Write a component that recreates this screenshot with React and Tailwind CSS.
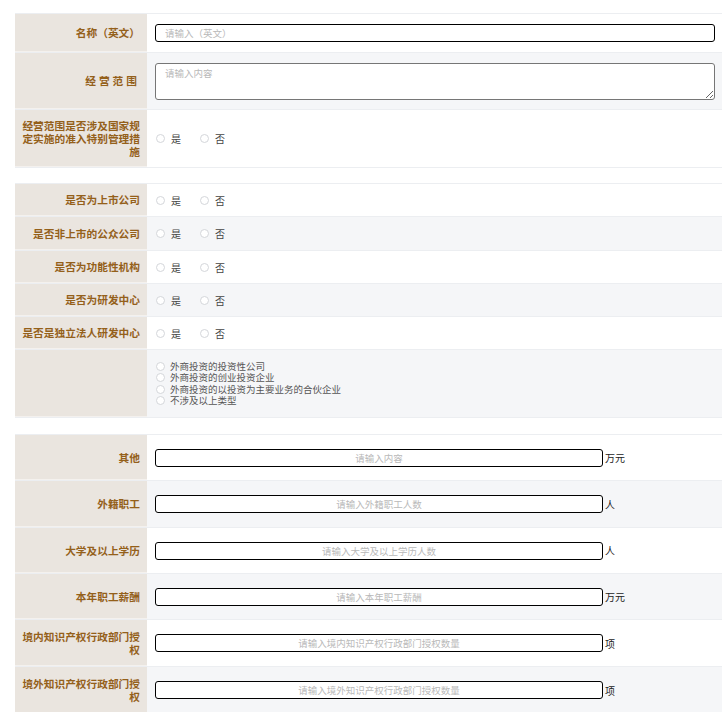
import React from "react";

const font = { fontFamily: '"Noto Sans CJK SC", "Noto Sans", sans-serif' };

function Label({ children, wide }) {
  return (
    <div
      className={`w-[132px] shrink-0 bg-[#eae5df] flex items-center justify-end text-right pr-[7px] pl-[5px] text-[10.7px] leading-[13px] font-bold text-[#94601a] border-b border-[#f4f1ee] ${wide ? "tracking-[3px]" : ""}`}
    >
      <span>{children}</span>
    </div>
  );
}

function Row({ label, h, gray, children, wide }) {
  return (
    <div
      className={`flex ${h} border-b border-[#eceef1] ${gray ? "bg-[#f5f6f8]" : "bg-white"}`}
    >
      <Label wide={wide}>{label}</Label>
      <div className="flex-1 flex items-center pl-[8px] pr-[7px]">{children}</div>
    </div>
  );
}

function Radio({ text }) {
  return (
    <label className="flex items-center gap-[6px] text-[10px] text-[#444]">
      <span className="w-[9px] h-[9px] rounded-full border border-[#d4d6da] bg-white"></span>
      <span>{text}</span>
    </label>
  );
}

function YesNo() {
  return (
    <div className="flex items-center gap-[19px] pl-[1px]">
      <Radio text="是" />
      <Radio text="否" />
    </div>
  );
}

function NumInput({ placeholder, unit }) {
  return (
    <div className="flex items-center">
      <input
        className="w-[448px] h-[18px] border border-black rounded-[3px] bg-white text-center text-[9.5px] outline-none placeholder:text-[#b9b9b9]"
        placeholder={placeholder}
      />
      <span className="ml-[2px] text-[10px] text-[#222]">{unit}</span>
    </div>
  );
}

export default function App() {
  const types = [
    "外商投资的投资性公司",
    "外商投资的创业投资企业",
    "外商投资的以投资为主要业务的合伙企业",
    "不涉及以上类型",
  ];

  return (
    <div className="min-h-screen bg-white pt-[13px] pl-[15px]" style={font}>
      <div className="border-t border-[#eceef1]">
        <Row label="名称（英文）" h="h-[39px]">
          <input
            className="w-full h-[18px] border border-black rounded-[3px] bg-white px-[9px] text-[9.5px] outline-none placeholder:text-[#b9b9b9]"
            placeholder="请输入（英文）"
          />
        </Row>
        <Row label="经营范围" h="h-[57px]" gray wide>
          <textarea
            className="w-full h-[37px] border border-[#767676] rounded-[3px] bg-white px-[9px] py-[2px] text-[9.5px] outline-none placeholder:text-[#b9b9b9]"
            placeholder="请输入内容"
          />
        </Row>
        <Row label="经营范围是否涉及国家规定实施的准入特别管理措施" h="h-[58px]">
          <YesNo />
        </Row>
      </div>

      <div className="mt-[15px] border-t border-[#eceef1]">
        <Row label="是否为上市公司" h="h-[33px]">
          <YesNo />
        </Row>
        <Row label="是否非上市的公众公司" h="h-[34px]" gray>
          <YesNo />
        </Row>
        <Row label="是否为功能性机构" h="h-[33px]">
          <YesNo />
        </Row>
        <Row label="是否为研发中心" h="h-[33px]" gray>
          <YesNo />
        </Row>
        <Row label="是否是独立法人研发中心" h="h-[33px]">
          <YesNo />
        </Row>
        <Row label="" h="h-[68px]" gray>
          <div className="flex flex-col pl-[1px]">
            {types.map((t) => (
              <div key={t} className="flex items-center h-[11.5px] leading-[11.5px] text-[9.5px] text-[#555]">
                <span className="w-[9px] h-[9px] rounded-full border border-[#d4d6da] bg-white mr-[5px]"></span>
                <span>{t}</span>
              </div>
            ))}
          </div>
        </Row>
      </div>

      <div className="mt-[16px] border-t border-[#eceef1]">
        <Row label="其他" h="h-[46px]">
          <NumInput placeholder="请输入内容" unit="万元" />
        </Row>
        <Row label="外籍职工" h="h-[47px]" gray>
          <NumInput placeholder="请输入外籍职工人数" unit="人" />
        </Row>
        <Row label="大学及以上学历" h="h-[46px]">
          <NumInput placeholder="请输入大学及以上学历人数" unit="人" />
        </Row>
        <Row label="本年职工薪酬" h="h-[46px]" gray>
          <NumInput placeholder="请输入本年职工薪酬" unit="万元" />
        </Row>
        <Row label="境内知识产权行政部门授权" h="h-[47px]">
          <NumInput placeholder="请输入境内知识产权行政部门授权数量" unit="项" />
        </Row>
        <Row label="境外知识产权行政部门授权" h="h-[47px]" gray>
          <NumInput placeholder="请输入境外知识产权行政部门授权数量" unit="项" />
        </Row>
      </div>
    </div>
  );
}
